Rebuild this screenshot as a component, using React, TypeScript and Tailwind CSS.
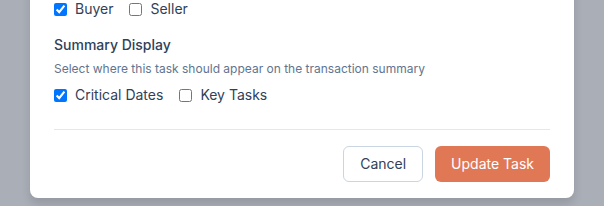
import { useState } from 'react'

const ROLES = ['Buyer', 'Seller']
const DISPLAYS = ['Critical Dates', 'Key Tasks']

function CheckRow({ items, checked, onToggle }: { items: string[]; checked: string[]; onToggle: (v: string) => void }) {
  return (
    <div className="flex items-center gap-4">
      {items.map((item) => (
        <label key={item} className="flex items-center gap-2 text-sm leading-5 text-slate-700 cursor-pointer">
          <input
            type="checkbox"
            checked={checked.includes(item)}
            onChange={() => onToggle(item)}
            className="w-[13px] h-[13px]"
          />
          {item}
        </label>
      ))}
    </div>
  )
}

export default function App() {
  const [roles, setRoles] = useState<string[]>(['Buyer'])
  const [display, setDisplay] = useState<string[]>(['Critical Dates'])

  const toggle = (list: string[], set: (v: string[]) => void) => (v: string) =>
    set(list.includes(v) ? list.filter((x) => x !== v) : [...list, v])

  return (
    <div className="w-full h-[206px] bg-[#a9aeb7] overflow-hidden font-['Inter',sans-serif]">
      <div className="ml-[30px] w-[544px] -mt-[31px] bg-white rounded-lg shadow-[0_6px_10px_rgba(0,0,0,0.12)] px-6 pt-[30px]">
        <CheckRow items={ROLES} checked={roles} onToggle={toggle(roles, setRoles)} />

        <div className="mt-4">
          <h3 className="text-sm leading-5 font-medium text-slate-700">Summary Display</h3>
          <p className="mt-1.5 text-xs leading-4 text-slate-500">
            Select where this task should appear on the transaction summary
          </p>
          <div className="mt-2">
            <CheckRow items={DISPLAYS} checked={display} onToggle={toggle(display, setDisplay)} />
          </div>
        </div>

        <div className="mt-6 border-t border-gray-200 pt-4 pb-4 flex justify-end gap-3">
          <button
            type="button"
            className="h-9 px-4 rounded-md border border-slate-300 bg-white text-sm text-slate-700 hover:bg-slate-50"
          >
            Cancel
          </button>
          <button
            type="button"
            className="h-9 px-4 rounded-md bg-[#e07856] text-sm text-white hover:bg-[#d16a48]"
          >
            Update Task
          </button>
        </div>
      </div>
    </div>
  )
}
